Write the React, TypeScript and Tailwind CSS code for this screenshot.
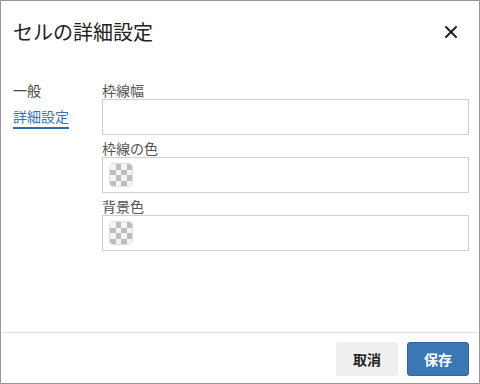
import React from "react";
import { X } from "lucide-react";

const font = { fontFamily: '"Noto Sans CJK JP", "Noto Sans", sans-serif' };

function Checker() {
  const cells = [];
  for (let r = 0; r < 4; r++) {
    for (let c = 0; c < 4; c++) {
      const gray = (r + c) % 2 === 1;
      cells.push(
        <div key={`${r}-${c}`} className={gray ? "bg-[#bdbdbd]" : "bg-[#f4f4f4]"} />
      );
    }
  }
  return (
    <div className="w-[24px] h-[24px] rounded-[4px] overflow-hidden grid grid-cols-4 grid-rows-4 border border-[#e0e0e0]">
      {cells}
    </div>
  );
}

function Field({ label, swatch }: { label: string; swatch?: boolean }) {
  return (
    <div className="flex flex-col mb-[4px]">
      <div className="text-[14px] leading-[18px] text-[#555]">{label}</div>
      <div className="h-[36px] border border-[#cfcfcf] bg-white flex items-center px-[6px]">
        {swatch && <Checker />}
      </div>
    </div>
  );
}

export default function App() {
  return (
    <div style={font} className="w-[480px] h-[384px] border border-[#9a9a9a] bg-white flex flex-col">
      <div className="h-[62px] flex items-center justify-between pl-[12px] pr-[18px] shrink-0">
        <div className="text-[20px] leading-[24px] text-[#222]">セルの詳細設定</div>
        <X size={20} strokeWidth={2.4} color="#222" />
      </div>
      <div className="flex-1 flex pt-[18px]">
        <div className="w-[101px] shrink-0 pl-[12px] flex flex-col items-start">
          <div className="text-[14px] leading-[18px] text-[#444]">一般</div>
          <div className="mt-[8px] text-[14px] leading-[18px] text-[#3a74b0] pb-[2px] border-b-2 border-[#2f6caa]">
            詳細設定
          </div>
        </div>
        <div className="flex-1 pr-[10px] flex flex-col">
          <Field label="枠線幅" />
          <Field label="枠線の色" swatch />
          <Field label="背景色" swatch />
        </div>
      </div>
      <div className="border-t border-[#dcdcdc] h-[51px] shrink-0 flex items-start justify-end gap-[9px] pt-[9px] pr-[10px]">
        <button className="w-[62px] h-[34px] rounded-[3px] bg-[#efefef] text-[14px] font-bold text-[#222]">
          取消
        </button>
        <button className="w-[62px] h-[34px] rounded-[3px] bg-[#3a77b3] border border-[#2e669d] text-[14px] font-bold text-white">
          保存
        </button>
      </div>
    </div>
  );
}
